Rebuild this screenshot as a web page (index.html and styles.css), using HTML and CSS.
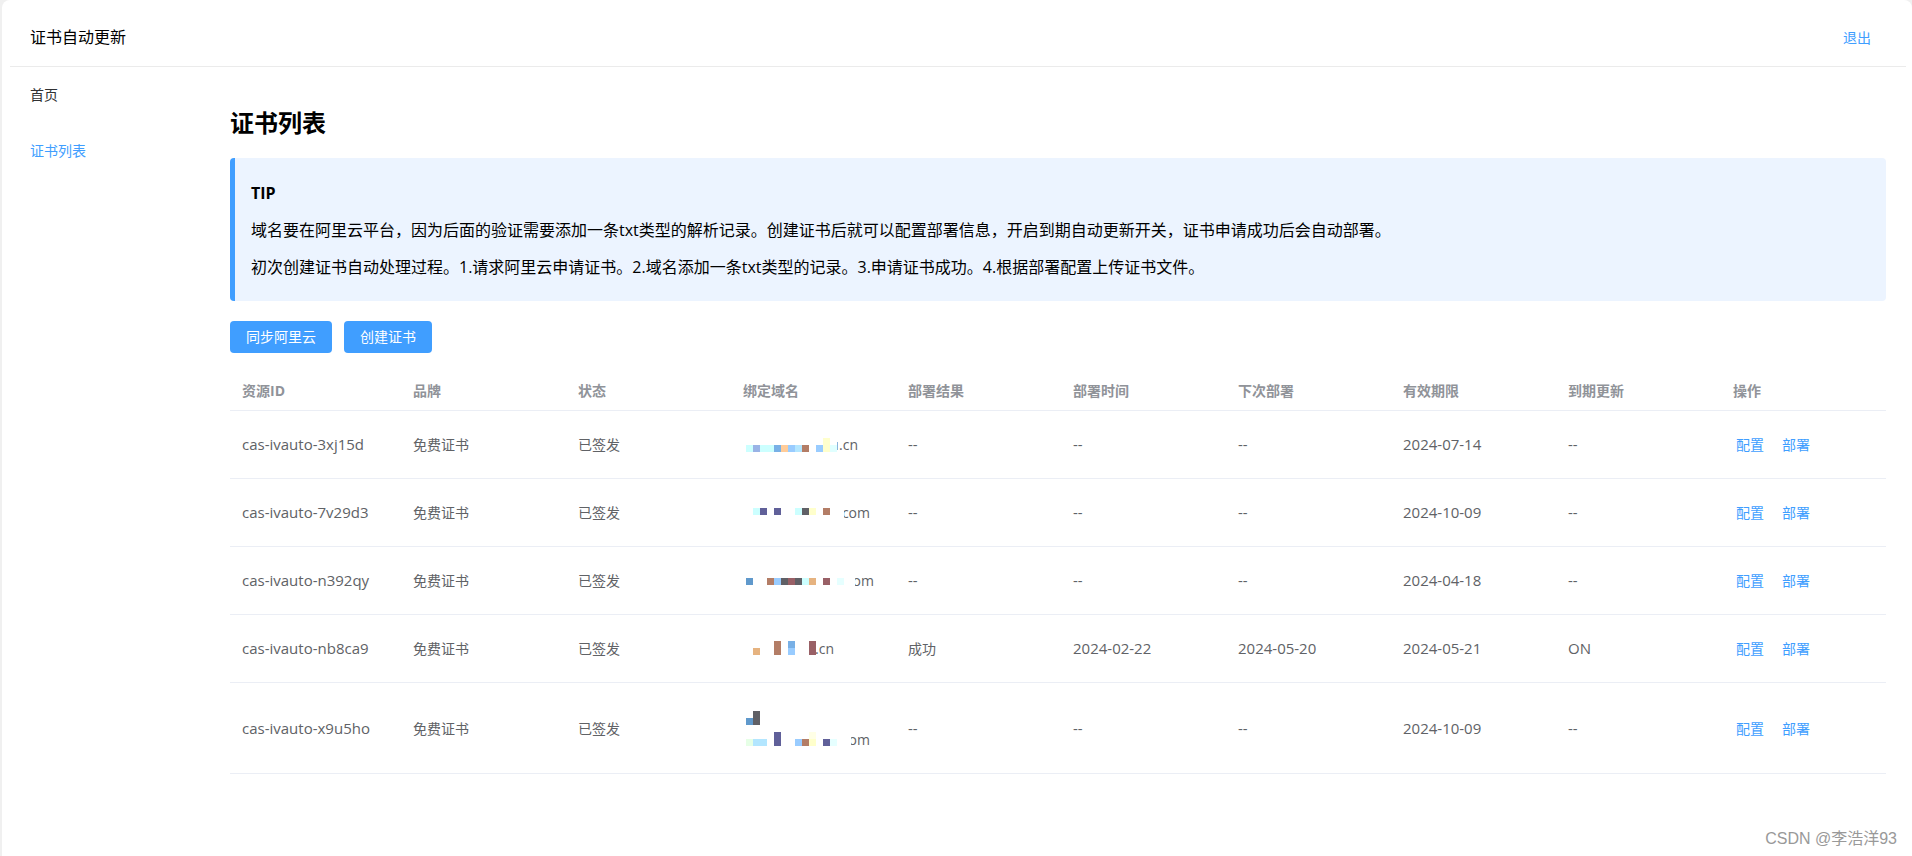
FILE: index.html
```html
<!DOCTYPE html>
<html lang="zh-CN">
<head>
<meta charset="utf-8">
<title>证书自动更新</title>
<link rel="stylesheet" href="styles.css">
</head>
<body>
<div class="frame">
  <header class="header">
    <div class="brand">证书自动更新</div>
    <a class="link" href="#logout">退出</a>
  </header>
  <div class="body">
    <nav class="sidebar">
      <a class="menu-item" href="#home">首页</a>
      <a class="menu-item active" href="#certs">证书列表</a>
    </nav>
    <main class="main">
      <h2 class="title">证书列表</h2>
      <section class="tip">
        <p class="tip-title">TIP</p>
        <p>域名要在阿里云平台，因为后面的验证需要添加一条txt类型的解析记录。创建证书后就可以配置部署信息，开启到期自动更新开关，证书申请成功后会自动部署。</p>
        <p>初次创建证书自动处理过程。1.请求阿里云申请证书。2.域名添加一条txt类型的记录。3.申请证书成功。4.根据部署配置上传证书文件。</p>
      </section>
      <div class="toolbar">
        <button type="button" class="btn">同步阿里云</button>
        <button type="button" class="btn">创建证书</button>
      </div>
      <table class="table">
        <colgroup><col class="col-id"><col><col><col><col><col><col><col><col><col></colgroup>
        <thead>
          <tr><th>资源ID</th><th>品牌</th><th>状态</th><th>绑定域名</th><th>部署结果</th><th>部署时间</th><th>下次部署</th><th>有效期限</th><th>到期更新</th><th>操作</th></tr>
        </thead>
        <tbody>
          <tr>
            <td class="num">cas-ivauto-3xj15d</td><td>免费证书</td><td>已签发</td>
            <td><div class="domain domain-a">.cn
              <svg class="mosaic" width="98" height="14" viewBox="0 0 98 14" shape-rendering="crispEdges" aria-hidden="true">
                <path fill="#ccffff" d="M0 7h7v7H0zM14 7h14v7H14z"/><path fill="#99b3e6" d="M7 7h7v7H7z"/><path fill="#78b0e6" d="M28 7h7v7h-7z"/><path fill="#ffcc99" d="M35 7h7v7h-7z"/><path fill="#99ccff" d="M42 7h7v7h-7zM70 7h7v7h-7z"/><path fill="#b3e6ff" d="M49 7h7v7h-7z"/><path fill="#b37d66" d="M56 7h7v7h-7z"/><path fill="#ffffcc" d="M77 0h7v14h-7z"/><path fill="#e0ffff" d="M84 7h7v7h-7z"/><path fill="#8ab4dc" d="M91 4h1v8h-1z"/>
              </svg></div></td>
            <td class="num">--</td><td class="num">--</td><td class="num">--</td><td class="num">2024-07-14</td><td class="num">--</td>
            <td><div class="actions"><a class="link" href="#config">配置</a><a class="link" href="#deploy">部署</a></div></td>
          </tr>
          <tr>
            <td class="num">cas-ivauto-7v29d3</td><td>免费证书</td><td>已签发</td>
            <td><div class="domain domain-b">com
              <svg class="mosaic" width="98" height="14" viewBox="0 0 98 14" shape-rendering="crispEdges" aria-hidden="true">
                <path fill="#fff" d="M0 0h98v14H0z"/><path fill="#ccffff" d="M7 2h7v7H7zM49 2h7v7h-7z"/><path fill="#606099" d="M14 2h7v7h-7zM28 2h7v7h-7z"/><path fill="#606066" d="M56 2h7v7h-7z"/><path fill="#ffffcc" d="M63 2h7v7h-7z"/><path fill="#b37d66" d="M77 2h7v7h-7z"/>
              </svg></div></td>
            <td class="num">--</td><td class="num">--</td><td class="num">--</td><td class="num">2024-10-09</td><td class="num">--</td>
            <td><div class="actions"><a class="link" href="#config">配置</a><a class="link" href="#deploy">部署</a></div></td>
          </tr>
          <tr>
            <td class="num">cas-ivauto-n392qy</td><td>免费证书</td><td>已签发</td>
            <td><div class="domain domain-c">om
              <svg class="mosaic" width="109" height="14" viewBox="0 0 109 14" shape-rendering="crispEdges" aria-hidden="true">
                <path fill="#fff" d="M0 0h109v14H0z"/><path fill="#6099cc" d="M0 4h7v7H0z"/><path fill="#b37d66" d="M21 4h7v7h-7z"/><path fill="#99ccff" d="M28 4h7v7h-7z"/><path fill="#606066" d="M35 4h7v7h-7zM49 4h7v7h-7z"/><path fill="#996066" d="M42 4h7v7h-7zM77 4h7v7h-7z"/><path fill="#ccffff" d="M56 4h7v7h-7z"/><path fill="#e6b380" d="M63 4h7v7h-7z"/><path fill="#e6ffff" d="M91 4h7v7h-7z"/>
              </svg></div></td>
            <td class="num">--</td><td class="num">--</td><td class="num">--</td><td class="num">2024-04-18</td><td class="num">--</td>
            <td><div class="actions"><a class="link" href="#config">配置</a><a class="link" href="#deploy">部署</a></div></td>
          </tr>
          <tr>
            <td class="num">cas-ivauto-nb8ca9</td><td>免费证书</td><td>已签发</td>
            <td><div class="domain domain-d">.cn
              <svg class="mosaic" width="70" height="14" viewBox="0 0 70 14" shape-rendering="crispEdges" aria-hidden="true">
                <path fill="#e6b380" d="M7 7h7v7H7z"/><path fill="#b37d66" d="M28 0h7v14h-7z"/><path fill="#78b0e6" d="M42 0h7v7h-7z"/><path fill="#99ccff" d="M42 7h7v7h-7z"/><path fill="#996066" d="M63 0h7v14h-7z"/>
              </svg></div></td>
            <td>成功</td><td class="num">2024-02-22</td><td class="num">2024-05-20</td><td class="num">2024-05-21</td><td class="num">ON</td>
            <td><div class="actions"><a class="link" href="#config">配置</a><a class="link" href="#deploy">部署</a></div></td>
          </tr>
          <tr>
            <td class="num">cas-ivauto-x9u5ho</td><td>免费证书</td><td>已签发</td>
            <td><div class="domain domain-e"><br>om
              <svg class="mosaic" width="105" height="36" viewBox="0 0 105 36" shape-rendering="crispEdges" aria-hidden="true">
                <path fill="#fff" d="M0 0h105v36H0z"/><path fill="#6099cc" d="M0 7h7v7H0z"/><path fill="#606066" d="M7 0h7v14H7z"/><path fill="#e6ffe6" d="M0 28h7v7H0z"/><path fill="#b3e6ff" d="M7 28h14v7H7z"/><path fill="#606099" d="M28 21h7v14h-7zM77 28h7v7h-7z"/><path fill="#99ccff" d="M49 28h7v7h-7z"/><path fill="#b37d66" d="M56 28h7v7h-7z"/><path fill="#ffffe6" d="M63 21h7v7h-7z"/><path fill="#ffffcc" d="M63 28h7v7h-7z"/><path fill="#e6ffff" d="M84 28h7v7h-7z"/>
              </svg></div></td>
            <td class="num">--</td><td class="num">--</td><td class="num">--</td><td class="num">2024-10-09</td><td class="num">--</td>
            <td><div class="actions"><a class="link" href="#config">配置</a><a class="link" href="#deploy">部署</a></div></td>
          </tr>
        </tbody>
      </table>
    </main>
  </div>
  <div class="watermark">CSDN @李浩洋93</div>
</div>
</body>
</html>
```
FILE: styles.css
```css
* { box-sizing: border-box; }
body {
  margin: 0;
  background: #f0f0f0;
  color: #000;
  font: 16px/21px "Open Sans", "Noto Sans CJK SC", sans-serif;
}
a { text-decoration: none; }
p { margin: 0; }
.frame {
  position: relative;
  min-height: 100vh;
  margin-left: 2px;
  padding: 8px 6px 0 8px;
  background: #fff;
  border-radius: 8px 8px 0 0;
}
.header {
  display: flex;
  align-items: center;
  justify-content: space-between;
  height: 59px;
  padding: 0 35px 0 20px;
  border-bottom: 1px solid #ebebeb;
}
.link { color: #409eff; font-size: 14px; }
.body { display: flex; }
.sidebar { flex: 0 0 200px; }
.menu-item {
  display: block;
  padding-left: 20px;
  color: #303133;
  font-size: 14px;
  line-height: 56px;
}
.menu-item.active { color: #409eff; }
.main { flex: 1; min-width: 0; padding: 40px 20px; }
.title { margin: 0 0 19px; font-size: 24px; line-height: 32px; }
.tip {
  display: grid;
  gap: 16px;
  padding: 25px 16px 23px;
  background: #ecf4ff;
  border-left: 5px solid #409eff;
  border-radius: 4px;
}
.tip-title { font-weight: 700; }
.toolbar { display: flex; gap: 12px; margin: 20px 0 18px; }
.btn {
  height: 32px;
  padding: 0 16px;
  border: 0;
  border-radius: 4px;
  background: #409eff;
  color: #fff;
  font: 400 14px/20px "Open Sans", "Noto Sans CJK SC", sans-serif;
}
.table {
  width: 100%;
  table-layout: fixed;
  border-collapse: separate;
  border-spacing: 0;
  color: #606266;
  font-size: 14px;
  line-height: 23px;
}
.col-id { width: 171px; }
.table th, .table td {
  padding: 22px 12px;
  border-bottom: 1px solid #ebeef5;
  text-align: left;
}
.table th { padding: 8px 12px; color: #909399; font-weight: 700; }
.table .num { font-size: 15px; }
.actions { display: flex; gap: 18px; padding-left: 3px; }
.domain { position: relative; text-align: right; }
.mosaic { position: absolute; left: 3px; }
.domain-a { width: 115px; }
.domain-b { width: 127px; }
.domain-c { width: 131px; }
.domain-d { width: 91px; }
.domain-e { width: 127px; }
.domain-a .mosaic, .domain-b .mosaic, .domain-c .mosaic { top: 5px; }
.domain-d .mosaic { top: 4px; }
.domain-e .mosaic { top: 6px; }
.watermark {
  position: absolute;
  right: 15px;
  bottom: 7px;
  color: #999;
  font: 16px/20px "Liberation Sans", "Noto Sans CJK SC", sans-serif;
}
```
